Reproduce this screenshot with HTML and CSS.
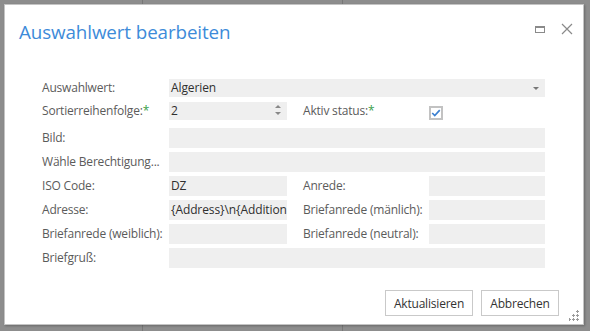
FILE: index.html
```html
<!DOCTYPE html>
<html lang="de">
<head>
<meta charset="utf-8">
<title>Auswahlwert bearbeiten</title>
<link rel="stylesheet" href="styles.css">
</head>
<body>
<div class="dialog">
  <div class="header">
    <h1 class="title">Auswahlwert bearbeiten</h1>
    <div class="win-icons">
      <svg class="icon-max" width="10" height="7" viewBox="0 0 10 7"><rect x="0.5" y="0.5" width="9" height="6" fill="none" stroke="#8a8a8a" stroke-width="1"/><rect x="0" y="0" width="10" height="2" fill="#8a8a8a"/></svg>
      <svg class="icon-close" width="12" height="12" viewBox="0 0 12 12"><path d="M1 1 L11 11 M11 1 L1 11" stroke="#8a8a8a" stroke-width="1.2" fill="none"/></svg>
    </div>
  </div>
  <div class="form">
    <div class="label">Auswahlwert:</div>
    <div class="field full select r1"><span>Algerien</span><span class="caret"></span></div>

    <div class="label r2">Sortierreihenfolge:<span class="req">*</span></div>
    <div class="field spin r2"><span>2</span>
      <span class="spin-arrows"><span class="up"></span><span class="down"></span></span>
    </div>
    <div class="label right r2">Aktiv status:<span class="req">*</span></div>
    <div class="check-cell r2">
      <span class="checkbox"><svg width="12" height="10" viewBox="0 0 12 10"><path d="M1.5 5 L4.5 8 L10.5 1.5" stroke="#3a7fd0" stroke-width="2" fill="none"/></svg></span>
    </div>

    <div class="label">Bild:</div>
    <div class="field full"></div>

    <div class="label">Wähle Berechtigung...</div>
    <div class="field full"></div>

    <div class="label">ISO Code:</div>
    <div class="field"><span>DZ</span></div>
    <div class="label right">Anrede:</div>
    <div class="field"></div>

    <div class="label">Adresse:</div>
    <div class="field"><span>{Address}\n{Addition</span></div>
    <div class="label right">Briefanrede (mänlich):</div>
    <div class="field"></div>

    <div class="label">Briefanrede (weiblich):</div>
    <div class="field"></div>
    <div class="label right">Briefanrede (neutral):</div>
    <div class="field"></div>

    <div class="label">Briefgruß:</div>
    <div class="field full"></div>
  </div>
  <div class="footer">
    <button class="btn btn-update">Aktualisieren</button>
    <button class="btn btn-cancel">Abbrechen</button>
  </div>
  <svg class="grip" width="11" height="11" viewBox="0 0 11 11">
    <g fill="#9a9a9a">
      <rect x="8" y="0" width="1" height="3"/><rect x="7" y="1" width="3" height="1"/>
      <rect x="4" y="4" width="1" height="3"/><rect x="3" y="5" width="3" height="1"/>
      <rect x="8" y="4" width="1" height="3"/><rect x="7" y="5" width="3" height="1"/>
      <rect x="0" y="8" width="1" height="3"/><rect x="-1" y="9" width="3" height="1"/>
      <rect x="4" y="8" width="1" height="3"/><rect x="3" y="9" width="3" height="1"/>
      <rect x="8" y="8" width="1" height="3"/><rect x="7" y="9" width="3" height="1"/>
    </g>
  </svg>
</div>
</body>
</html>
```
FILE: styles.css
```css
html, body {
  margin: 0;
  padding: 0;
}
body {
  width: 590px;
  height: 331px;
  overflow: hidden;
  background-color: #8d8d8d;
  background-image:
    linear-gradient(#777, #777),
    linear-gradient(#777, #777);
  background-size: 1px 100%, 1px 100%;
  background-position: 142px 0, 342px 0;
  background-repeat: no-repeat;
  font-family: "Open Sans", "Noto Sans", sans-serif;
  padding: 4px 0 0 4px;
  box-sizing: border-box;
}
.dialog {
  position: relative;
  width: 580px;
  height: 321px;
  box-sizing: border-box;
  background: #fff;
  border: 1px solid #c4c4c4;
  box-shadow: 1px 1px 2px rgba(0,0,0,0.25);
  display: flex;
  flex-direction: column;
}
.header {
  display: flex;
  align-items: flex-start;
  justify-content: space-between;
  padding: 14px 10px 0 14px;
  height: 60px;
  box-sizing: border-box;
}
.title {
  margin: 0;
  font-size: 18.8px;
  font-weight: 400;
  color: #3d8bd9;
  line-height: 26px;
  letter-spacing: -0.1px;
}
.win-icons {
  display: flex;
  align-items: center;
  gap: 16px;
  padding-top: 4px;
}
.icon-max { display: block; }
.icon-close { display: block; }
.form {
  display: grid;
  grid-template-columns: 127px 118px 142px 116px;
  grid-template-rows: 20px 22px;
  grid-auto-rows: 20px;
  row-gap: 4px;
  align-items: center;
  padding: 13px 0 0 37px;
  font-size: 12px;
}
.label {
  color: #5b5b5b;
  white-space: nowrap;
  line-height: 20px;
  letter-spacing: -0.2px;
}
.label.right { padding-left: 16px; }
.req { color: #3aa04a; }
.field {
  height: 20px;
  background: #efefef;
  color: #2f2f2f;
  line-height: 20px;
  padding-left: 2px;
  overflow: hidden;
  white-space: nowrap;
  position: relative;
  box-sizing: border-box;
  letter-spacing: -0.1px;
}
.field.full { grid-column: 2 / 5; }
.r1 { height: 18px; line-height: 18px; }
.form > .r2 { align-self: start; }
.field.r2 { height: 18px; line-height: 18px; }
.label.r2 { line-height: 18px; }
.select .caret {
  position: absolute;
  right: 6px;
  top: 8px;
  border-left: 3px solid transparent;
  border-right: 3px solid transparent;
  border-top: 3px solid #777;
}
.spin-arrows {
  position: absolute;
  right: 6px;
  top: 3px;
  display: flex;
  flex-direction: column;
  gap: 4px;
}
.spin-arrows .up {
  border-left: 3px solid transparent;
  border-right: 3px solid transparent;
  border-bottom: 3px solid #888;
}
.spin-arrows .down {
  border-left: 3px solid transparent;
  border-right: 3px solid transparent;
  border-top: 3px solid #888;
}
.check-cell {
  display: flex;
  align-items: center;
}
.checkbox {
  width: 14px;
  height: 14px;
  box-sizing: border-box;
  border: 2px solid #c2c2c2;
  background: #fff;
  display: flex;
  align-items: center;
  justify-content: center;
  margin-top: 4px;
}
.footer {
  margin-top: auto;
  display: flex;
  justify-content: flex-end;
  gap: 8px;
  padding: 0 24px 8px 0;
}
.btn {
  height: 26px;
  border: 1px solid #c9c9c9;
  background: #fff;
  color: #333;
  font-family: "Open Sans", "Noto Sans", sans-serif;
  font-size: 12px;
  padding: 0;
  letter-spacing: -0.2px;
}
.btn-update { width: 88px; }
.btn-cancel { width: 78px; }
.grip {
  position: absolute;
  right: 3px;
  bottom: 3px;
}
```
